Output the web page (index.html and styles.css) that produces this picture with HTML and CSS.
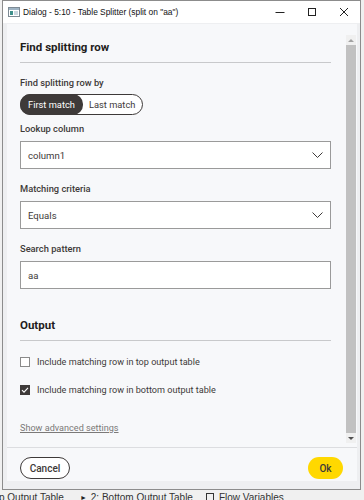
FILE: index.html
```html
<!doctype html>
<html>
<head>
<meta charset="utf-8">
<title>Dialog - 5:10 - Table Splitter</title>
<link rel="stylesheet" href="styles.css">
</head>
<body>
<div class="window">
	<div class="titlebar">
		<svg class="app-icon" width="12" height="10" viewBox="0 0 12 10">
			<rect x="0.5" y="0.5" width="11" height="9" fill="#fff" stroke="#7d8a94"/>
			<rect x="1" y="1" width="10" height="2" fill="#9fb4c4"/>
			<rect x="2" y="4" width="3" height="4" fill="#3d8f8a"/>
			<rect x="6" y="4" width="4" height="4" fill="#c9d6df"/>
		</svg>
		<span class="title">Dialog - 5:10 - Table Splitter (split on "aa")</span>
		<div class="controls">
			<span class="ctl"><svg width="10" height="10" viewBox="0 0 10 10"><path d="M0.5 5.5h9" stroke="#222" stroke-width="1"/></svg></span>
			<span class="ctl"><svg width="10" height="10" viewBox="0 0 10 10"><rect x="1.5" y="1.5" width="7" height="7" fill="none" stroke="#222"/></svg></span>
			<span class="ctl"><svg width="10" height="10" viewBox="0 0 10 10"><path d="M1 1l8 8M9 1l-8 8" stroke="#222" stroke-width="1"/></svg></span>
		</div>
	</div>
	<div class="frame">
		<div class="panel">
			<div class="scroll">
				<div class="content">
					<h2 class="section">Find splitting row</h2>
					<hr class="rule">
					<div class="label first">Find splitting row by</div>
					<div class="seg">
						<span class="seg-item active">First match</span>
						<span class="seg-item">Last match</span>
					</div>

					<div class="label after-seg">Lookup column</div>
					<div class="field">
						<span>column1</span>
						<svg class="chev" width="11" height="6" viewBox="0 0 11 6"><path d="M0.5 0.5l5 5 5-5" fill="none" stroke="#3e3a39" stroke-width="1"/></svg>
					</div>

					<div class="label">Matching criteria</div>
					<div class="field">
						<span>Equals</span>
						<svg class="chev" width="11" height="6" viewBox="0 0 11 6"><path d="M0.5 0.5l5 5 5-5" fill="none" stroke="#3e3a39" stroke-width="1"/></svg>
					</div>

					<div class="label">Search pattern</div>
					<div class="field">
						<span>aa</span>
					</div>

					<h2 class="section output">Output</h2>
					<hr class="rule">
					<div class="check-row first-check">
						<span class="box"></span>
						<span>Include matching row in top output table</span>
					</div>
					<div class="check-row">
						<span class="box checked"><svg width="10" height="10" viewBox="0 0 10 10"><path d="M2 5.2l2 2 4-4.4" fill="none" stroke="#fff" stroke-width="1.1"/></svg></span>
						<span>Include matching row in bottom output table</span>
					</div>
					<a href="javascript:;" class="advanced">Show advanced settings</a>
				</div>
				<div class="scrollbar">
					<div class="sb-btn"><span class="tri up"></span></div>
					<div class="sb-thumb"></div>
					<div class="sb-btn"><span class="tri down"></span></div>
				</div>
			</div>
			<div class="footer">
				<button class="btn cancel">Cancel</button>
				<button class="btn ok">Ok</button>
			</div>
		</div>
	</div>
</div>
<div class="tabs">
	<span class="tab t1">p Output Table</span>
	<span class="tab t2"><span class="tab-ico">&#9658;</span>2: Bottom Output Table</span>
	<span class="tab t3"><span class="tab-ico sq"></span>Flow Variables</span>
</div>
</body>
</html>
```

FILE: styles.css
```css
*{ margin:0; padding:0; box-sizing:border-box;}
body{ width:364px; height:500px; overflow:hidden; background:#f0f0f0; font-family:Roboto, "Noto Sans", sans-serif; color:#3e3a39;}

.window{ margin-left:2px; width:359px; border:1px solid #8c8c8c; background:#eeeff1;}
.titlebar{ height:22px; background:#fff; display:flex; align-items:center; padding-left:5px;}
.app-icon{ flex:none; margin-top:-1px;}
.title{ margin-left:3px; font-family:"Liberation Sans", Arial, sans-serif; font-size:8.4px; color:#111; white-space:nowrap;}
.controls{ margin-left:auto; display:flex; height:22px;}
.ctl{ width:32px; display:flex; align-items:center; justify-content:center;}

.frame{ padding:1px 3px 8px 4px;}
.panel{ background:#f7f8fa; width:350px;}
.scroll{ display:flex; height:423px; overflow:hidden;}
.content{ width:339px; padding:15px 15px 0 13px;}

.section{ font-size:11.5px; font-weight:700; line-height:16px; color:#1f1d1c;}
.section.output{ margin-top:28px;}
.rule{ border:0; border-top:1px solid #c8c9cb; margin-top:7px;}

.label{ font-size:9.3px; font-weight:500; line-height:14px; margin-top:13px;}
.label.after-seg{ margin-top:7px;}

.seg{ display:inline-flex; margin-top:4px; height:21px; border:1px solid #3e3a39; border-radius:11px; background:#fff; font-size:9.3px;}
.seg-item{ display:flex; align-items:center; padding:0 7px 0 6px; border-radius:10px; margin:-1px 0;}
.seg-item.active{ background:#3e3a39; color:#fff; margin-left:-1px; padding:0 8px;}

.field{ margin-top:5px; height:28px; border:1px solid #9a9a9a; background:#fff; display:flex; align-items:center; justify-content:space-between; padding:0 7px; font-size:9.6px;}
.chev{ flex:none;}

.check-row{ display:flex; align-items:center; line-height:14px; font-size:9.1px; margin-top:14px;}
.box{ width:10px; height:10px; border:1px solid #8a8a8a; background:#fff; margin-right:7px; flex:none;}
.box.checked{ background:#3e3a39; border-color:#3e3a39; display:flex;}
.box.checked svg{ margin:-1px;}

.advanced{ display:inline-block; margin-top:24px; font-size:9.1px; line-height:14px; color:#7b7978; text-decoration:underline;}

.scrollbar{ width:10px; margin:11px 0 4px; background:#f0f0f0; display:flex; flex-direction:column;}
.sb-btn{ height:10px; display:flex; align-items:center; justify-content:center; flex:none;}
.sb-thumb{ flex:1; background:#c1c1c1;}
.tri{ width:0; height:0; border-left:3px solid transparent; border-right:3px solid transparent;}
.tri.up{ border-bottom:3px solid #a3a3a3;}
.tri.down{ border-top:3px solid #505050;}

.footer{ border-top:1px solid #dcdde0; height:34px; padding:9px 14px 0 13px; display:flex; justify-content:space-between; align-items:flex-start;}
.btn{ height:22px; border-radius:11px; font-family:Roboto, sans-serif; font-size:10px; font-weight:500; color:#3e3a39;}
.cancel{ width:50px; border:1px solid #3e3a39; background:#fff;}
.ok{ width:35px; border:0; background:#ffd800;}

.tabs{ height:12px; font-family:"Liberation Sans", Arial, sans-serif; font-size:10px; line-height:13px; color:#333; white-space:nowrap; display:flex; margin-top:1px;}
.tab{ display:flex; align-items:center;}
.t1{ margin-left:-1px;}
.t2{ margin-left:16px;}
.t3{ margin-left:13px;}
.tab-ico{ font-size:7px; margin-right:4px; color:#222;}
.tab-ico.sq{ width:8px; height:8px; border:1px solid #333; margin-right:5px;}
```
